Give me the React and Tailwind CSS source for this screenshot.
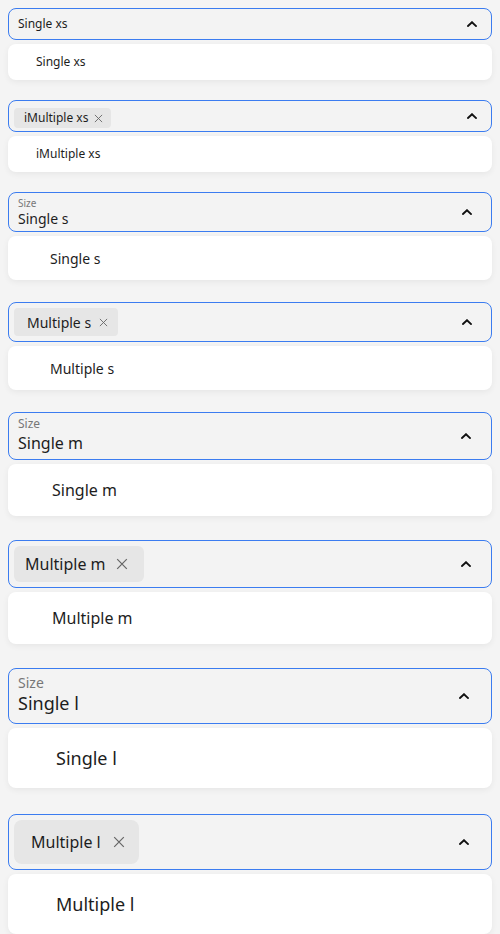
import React from "react";

const Chevron = ({ className }) => (
  <svg className={className} viewBox="0 0 10 6" fill="none">
    <polyline points="1,5 5,1.2 9,5" stroke="#111" strokeWidth="1.9" strokeLinecap="square" strokeLinejoin="miter" />
  </svg>
);

const X = ({ className }) => (
  <svg className={className} viewBox="0 0 10 10" fill="none">
    <path d="M1 1 L9 9 M9 1 L1 9" stroke="#666" strokeWidth="1" />
  </svg>
);

const fieldCls = "flex items-center w-full rounded-[8px] border border-[#3b7cf0] bg-[#f3f3f3] overflow-hidden";
const menuCls = "w-full rounded-[8px] bg-white shadow-[0_2px_6px_rgba(0,0,0,0.06)] flex items-center text-[#1d1d1d]";

export default function App() {
  return (
    <div className="min-h-[934px] w-[500px] bg-[#f4f4f4] px-2 pt-2 font-['Noto_Sans',sans-serif] text-[#1d1d1d] overflow-hidden">
      {/* xs single */}
      <div className="mb-[20px]">
        <div className={fieldCls + " h-[32px] pl-[9px] pr-[14px]"}>
          <span className="text-[12px] leading-none flex-1">Single xs</span>
          <Chevron className="w-[10px] h-[6px]" />
        </div>
        <div className={menuCls + " mt-[4px] h-[36px] pl-[28px] text-[12px]"}>Single xs</div>
      </div>

      {/* xs multiple */}
      <div className="mb-[20px]">
        <div className={fieldCls + " h-[32px] pl-[5px] pr-[14px]"}>
          <div className="flex-1">
            <span className="inline-flex items-center h-[20px] rounded-[4px] bg-[#e6e6e6] pl-[10px] pr-[8px] text-[12px]">
              iMultiple xs
              <X className="ml-[6px] w-[9px] h-[9px]" />
            </span>
          </div>
          <Chevron className="w-[10px] h-[6px]" />
        </div>
        <div className={menuCls + " mt-[4px] h-[36px] pl-[28px] text-[12px]"}>iMultiple xs</div>
      </div>

      {/* s single */}
      <div className="mb-[22px]">
        <div className={fieldCls + " h-[40px] pl-[9px] pr-[19px]"}>
          <div className="flex-1 flex flex-col self-start pt-[4px]">
            <span className="text-[10px] leading-[13px] text-[#777]">Size</span>
            <span className="text-[14px] leading-[18px]">Single s</span>
          </div>
          <Chevron className="w-[10px] h-[6px]" />
        </div>
        <div className={menuCls + " mt-[4px] h-[44px] pl-[42px] text-[14px]"}>Single s</div>
      </div>

      {/* s multiple */}
      <div className="mb-[22px]">
        <div className={fieldCls + " h-[40px] pl-[5px] pr-[19px]"}>
          <div className="flex-1">
            <span className="inline-flex items-center h-[28px] rounded-[4px] bg-[#e6e6e6] pl-[13px] pr-[10px] text-[14px]">
              Multiple s
              <X className="ml-[8px] w-[9px] h-[9px]" />
            </span>
          </div>
          <Chevron className="w-[10px] h-[6px]" />
        </div>
        <div className={menuCls + " mt-[4px] h-[44px] pl-[42px] text-[14px]"}>Multiple s</div>
      </div>

      {/* m single */}
      <div className="mb-[24px]">
        <div className={fieldCls + " h-[48px] pl-[9px] pr-[20px]"}>
          <div className="flex-1 flex flex-col self-start pt-[4px]">
            <span className="text-[12px] leading-[14px] text-[#777]">Size</span>
            <span className="text-[16px] leading-[24px]">Single m</span>
          </div>
          <Chevron className="w-[10px] h-[6px]" />
        </div>
        <div className={menuCls + " mt-[4px] h-[52px] pl-[44px] text-[16px]"}>Single m</div>
      </div>

      {/* m multiple */}
      <div className="mb-[24px]">
        <div className={fieldCls + " h-[48px] pl-[5px] pr-[20px]"}>
          <div className="flex-1">
            <span className="inline-flex items-center h-[36px] rounded-[6px] bg-[#e6e6e6] pl-[11px] pr-[16px] text-[16px]">
              Multiple m
              <X className="ml-[10px] w-[12px] h-[12px]" />
            </span>
          </div>
          <Chevron className="w-[10px] h-[6px]" />
        </div>
        <div className={menuCls + " mt-[4px] h-[52px] pl-[44px] text-[16px]"}>Multiple m</div>
      </div>

      {/* l single */}
      <div className="mb-[26px]">
        <div className={fieldCls + " h-[56px] pl-[9px] pr-[22px]"}>
          <div className="flex-1 flex flex-col self-start pt-[6px]">
            <span className="text-[14px] leading-[16px] text-[#777]">Size</span>
            <span className="text-[18px] leading-[24px]">Single l</span>
          </div>
          <Chevron className="w-[10px] h-[6px]" />
        </div>
        <div className={menuCls + " mt-[4px] h-[60px] pl-[48px] text-[18px]"}>Single l</div>
      </div>

      {/* l multiple */}
      <div>
        <div className={fieldCls + " h-[56px] pl-[5px] pr-[22px]"}>
          <div className="flex-1">
            <span className="inline-flex items-center h-[44px] rounded-[8px] bg-[#e6e6e6] pl-[17px] pr-[14px] text-[16px]">
              Multiple l
              <X className="ml-[12px] w-[12px] h-[12px]" />
            </span>
          </div>
          <Chevron className="w-[10px] h-[6px]" />
        </div>
        <div className={menuCls + " mt-[4px] h-[60px] pl-[48px] text-[18px]"}>Multiple l</div>
      </div>
    </div>
  );
}
